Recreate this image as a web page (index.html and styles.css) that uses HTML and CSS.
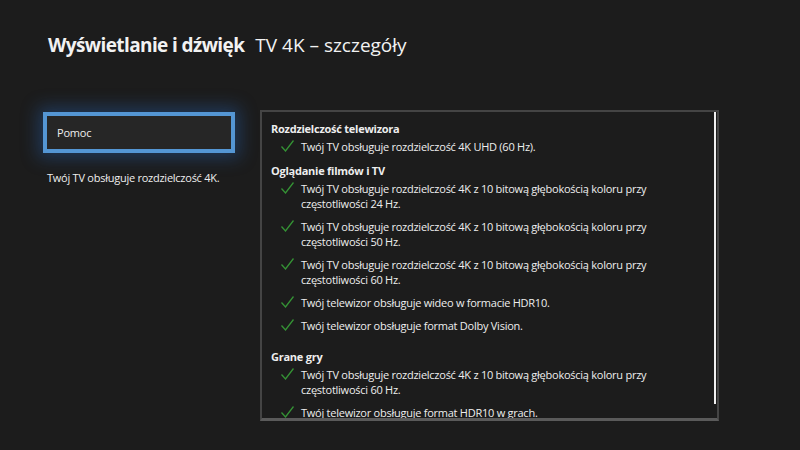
FILE: index.html
```html
<!DOCTYPE html>
<html lang="pl">
<head>
    <meta charset="UTF-8">
    <title>Wyświetlanie i dźwięk - TV 4K</title>
    <link rel="stylesheet" href="styles.css">
</head>
<body>
    <h1 class="tytul"><b>Wyświetlanie i dźwięk</b> <span>TV 4K – szczegóły</span></h1>

    <div class="uklad">
        <!-- lewa kolumna -->
        <div class="lewa">
            <div class="przycisk">Pomoc</div>
            <p class="opis">Twój TV obsługuje rozdzielczość 4K.</p>
        </div>

        <!-- panel ze szczegółami -->
        <div class="panel">
            <div class="tresc">
                <h2>Rozdzielczość telewizora</h2>
                <ul>
                    <li><svg class="ok" viewBox="0 0 13 12"><path d="M0.5 6.5 L4.5 11 L12.5 0.5"/></svg>Twój TV obsługuje rozdzielczość 4K UHD (60 Hz).</li>
                </ul>

                <h2>Oglądanie filmów i TV</h2>
                <ul>
                    <li><svg class="ok" viewBox="0 0 13 12"><path d="M0.5 6.5 L4.5 11 L12.5 0.5"/></svg>Twój TV obsługuje rozdzielczość 4K z 10 bitową głębokością koloru przy częstotliwości 24 Hz.</li>
                    <li><svg class="ok" viewBox="0 0 13 12"><path d="M0.5 6.5 L4.5 11 L12.5 0.5"/></svg>Twój TV obsługuje rozdzielczość 4K z 10 bitową głębokością koloru przy częstotliwości 50 Hz.</li>
                    <li><svg class="ok" viewBox="0 0 13 12"><path d="M0.5 6.5 L4.5 11 L12.5 0.5"/></svg>Twój TV obsługuje rozdzielczość 4K z 10 bitową głębokością koloru przy częstotliwości 60 Hz.</li>
                    <li><svg class="ok" viewBox="0 0 13 12"><path d="M0.5 6.5 L4.5 11 L12.5 0.5"/></svg>Twój telewizor obsługuje wideo w formacie HDR10.</li>
                    <li><svg class="ok" viewBox="0 0 13 12"><path d="M0.5 6.5 L4.5 11 L12.5 0.5"/></svg>Twój telewizor obsługuje format Dolby Vision.</li>
                </ul>

                <h2 class="odstep">Grane gry</h2>
                <ul>
                    <li><svg class="ok" viewBox="0 0 13 12"><path d="M0.5 6.5 L4.5 11 L12.5 0.5"/></svg>Twój TV obsługuje rozdzielczość 4K z 10 bitową głębokością koloru przy częstotliwości 60 Hz.</li>
                    <li><svg class="ok" viewBox="0 0 13 12"><path d="M0.5 6.5 L4.5 11 L12.5 0.5"/></svg>Twój telewizor obsługuje format HDR10 w grach.</li>
                </ul>
            </div>
            <div class="pasek"></div>
        </div>
    </div>
</body>
</html>
```

FILE: styles.css
```css
/* Ogólne */
body {
    margin: 0;
    width: 800px;
    height: 450px;
    overflow: hidden;
    background: #1c1c1c;
    color: #eeeeee;
    font-family: "Open Sans", "Noto Sans", sans-serif;
}
.tytul {
    margin: 0;
    padding: 30px 0 0 48px;
    font-size: 19px;
    font-weight: normal;
    color: #f2f2f2;
    line-height: 30px;
}
.tytul b {
    font-weight: 700;
    letter-spacing: -0.6px;
    margin-right: 6px;
}
.uklad {
    display: flex;
    padding: 50px 0 0 43px;
}
.lewa {
    width: 192px;
    margin-right: 25px;
    padding-top: 2px;
}
.przycisk {
    height: 33px;
    line-height: 33px;
    padding-left: 10px;
    background: #262626;
    border: 4px solid #5496d4;
    box-shadow: 0 0 16px 5px rgba(40, 110, 200, 0.35);
    font-size: 11px;
    letter-spacing: -0.2px;
}
.opis {
    margin: 17px 0 0 4px;
    font-size: 11px;
    letter-spacing: -0.25px;
}
/* Panel */
.panel {
    position: relative;
    width: 455px;
    height: 306px;
    border: 2px solid #444;
    border-bottom: 3px solid #5a5a5a;
    overflow: hidden;
}
.tresc {
    padding: 8px 0 0 9px;
    font-size: 11px;
    letter-spacing: -0.25px;
}
h2 {
    margin: 0 0 1px;
    font-size: 11px;
    font-weight: 700;
    line-height: 18px;
}
h2.odstep {
    margin-top: 15px;
}
ul {
    list-style: none;
    margin: 0;
    padding: 0 0 0 30px;
}
li {
    position: relative;
    line-height: 15px;
    margin-bottom: 8px;
    max-width: 350px;
}
.ok {
    position: absolute;
    left: -20px;
    top: 1px;
    width: 13px;
    height: 12px;
    fill: none;
    stroke: #359335;
    stroke-width: 1.3;
}
.pasek {
    position: absolute;
    right: 1px;
    top: 0;
    width: 2px;
    height: 292px;
    background: #f0f0f0;
}
```
